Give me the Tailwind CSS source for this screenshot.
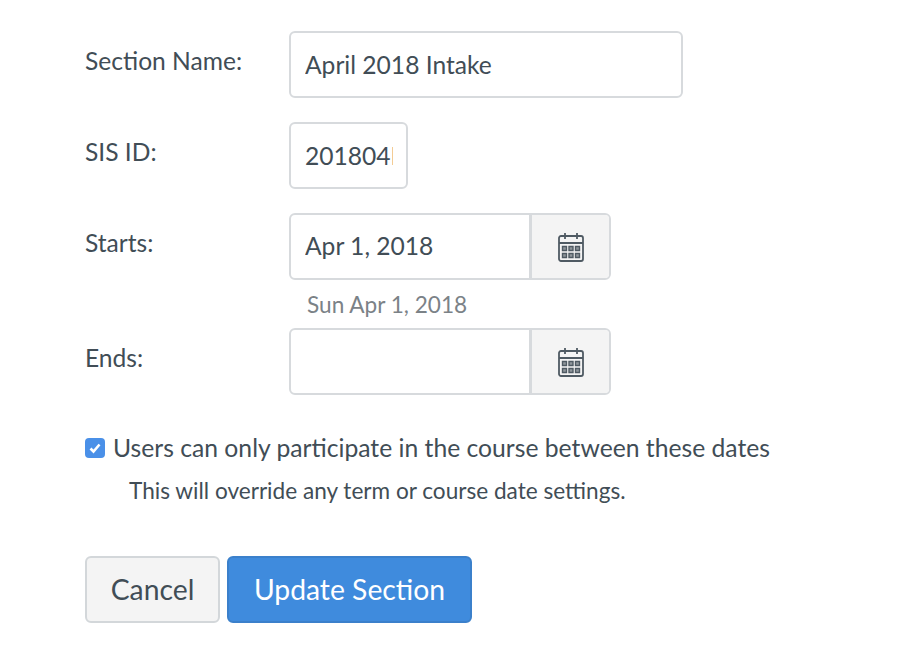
<!DOCTYPE html>
<html lang="en">
<head>
	<meta charset="utf-8">
	<script src="https://cdn.jsdelivr.net/npm/@tailwindcss/browser@4"></script>
	<title>Edit Section</title>
</head>
<body class="bg-white overflow-hidden font-['Lato',sans-serif] text-[#414d56]">
	<form class="w-[920px] h-[660px] pl-[85px] pt-[31px]">
		<div class="flex items-start">
			<label class="w-[204px] pt-[12px] text-[24.600px] leading-[36px]">Section Name:</label>
			<input type="text" value="April 2018 Intake" class="w-[394px] h-[67px] px-[14px] bg-white border-2 border-[#d7dadd] rounded-[6px] text-[24.600px]">
		</div>
		<div class="flex items-start mt-[24px]">
			<label class="w-[204px] pt-[12px] text-[24.600px] leading-[36px]">SIS ID:</label>
			<input type="text" value="201804B" class="w-[119px] h-[67px] pl-[14px] pr-[13px] bg-white border-2 border-[#d7dadd] rounded-[6px] text-[24.600px]">
		</div>
		<div class="flex items-start mt-[24px]">
			<label class="w-[204px] pt-[12px] text-[24.600px] leading-[36px]">Starts:</label>
			<div class="flex w-[322px] h-[67px] border-2 border-[#d7dadd] rounded-[6px] overflow-hidden">
				<input type="text" value="Apr 1, 2018" class="flex-1 min-w-0 px-[14px] text-[24.600px]">
				<div class="w-[80px] flex items-center justify-center bg-[#f4f4f4] border-l-[3px] border-[#d7dadd]">
					<svg class="w-[26px] h-[30px]" viewBox="0 0 26 30" fill="none" stroke="#4f5a63" stroke-width="1.800">
						<rect x="1" y="4" width="24" height="25" rx="2"/>
						<path d="M1 11h24M7 1v6M19 1v6"/>
						<path stroke-width="1.400" fill="#8f969b" d="M4.500 14.500h4v4h-4zM11 14.500h4v4h-4zM17.500 14.500h4v4h-4zM4.500 21.500h4v4h-4zM11 21.500h4v4h-4zM17.500 21.500h4v4h-4z"/>
					</svg>
				</div>
			</div>
		</div>
		<p class="ml-[222px] mt-[10px] text-[22.600px] leading-[30px] text-[#7b8287]">Sun Apr 1, 2018</p>
		<div class="flex items-start mt-[8px]">
			<label class="w-[204px] pt-[12px] text-[24.600px] leading-[36px]">Ends:</label>
			<div class="flex w-[322px] h-[67px] border-2 border-[#d7dadd] rounded-[6px] overflow-hidden">
				<input type="text" class="flex-1 min-w-0 px-[14px] text-[24.600px]">
				<div class="w-[80px] flex items-center justify-center bg-[#f4f4f4] border-l-[3px] border-[#d7dadd]">
					<svg class="w-[26px] h-[30px]" viewBox="0 0 26 30" fill="none" stroke="#4f5a63" stroke-width="1.800">
						<rect x="1" y="4" width="24" height="25" rx="2"/>
						<path d="M1 11h24M7 1v6M19 1v6"/>
						<path stroke-width="1.400" fill="#8f969b" d="M4.500 14.500h4v4h-4zM11 14.500h4v4h-4zM17.500 14.500h4v4h-4zM4.500 21.500h4v4h-4zM11 21.500h4v4h-4zM17.500 21.500h4v4h-4z"/>
					</svg>
				</div>
			</div>
		</div>
		<div class="flex items-center mt-[35px] h-[36px]">
			<span class="w-[20px] h-[20px] flex items-center justify-center bg-[#4a90e8] rounded-[4px]">
				<svg class="w-[14px] h-[14px]" viewBox="0 0 14 14" fill="none" stroke="#fff" stroke-width="2.600"><path d="M2.500 7.500l3 3 6-7"/></svg>
			</span>
			<label class="ml-[8px] text-[24.700px] leading-[36px]">Users can only participate in the course between these dates</label>
		</div>
		<p class="ml-[44px] mt-[9px] text-[22.600px] leading-[32px]">This will override any term or course date settings.</p>
		<div class="flex gap-[7px] mt-[49px]">
			<button type="button" class="w-[135px] h-[67px] bg-[#f4f4f4] border-2 border-[#d3d7da] rounded-[6px] text-[28.300px]">Cancel</button>
			<button type="button" class="w-[245px] h-[67px] bg-[#3f8bdd] border-2 border-[#3b80cb] rounded-[6px] text-[28.300px] text-white">Update Section</button>
		</div>
	</form>
</body>
</html>
